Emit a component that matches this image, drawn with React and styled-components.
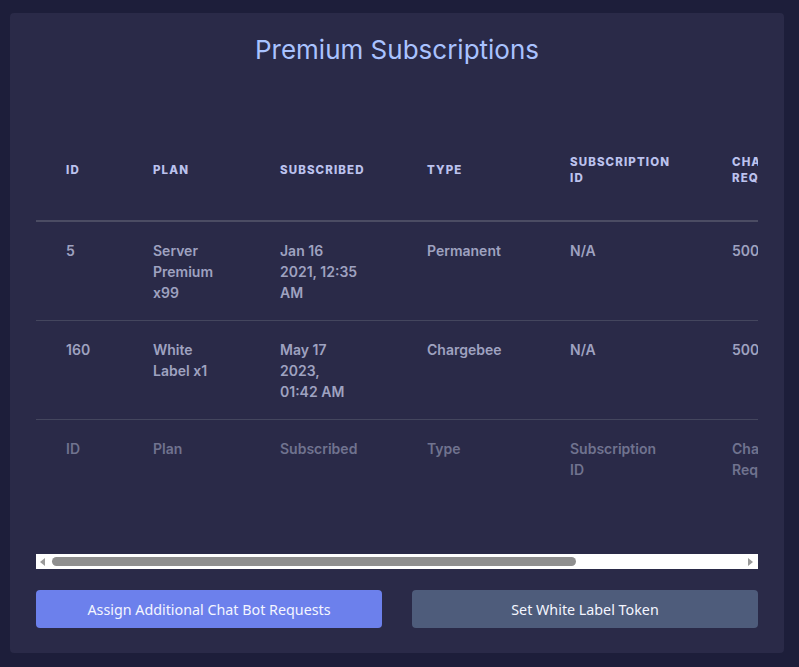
import styled, { createGlobalStyle } from "styled-components";

const GlobalStyle = createGlobalStyle`
  html, body {
    margin: 0;
    padding: 0;
    background: #1d1e3a;
  }
  body {
    font-family: Inter, "Liberation Sans", sans-serif;
  }
`;

const Page = styled.div`
  min-height: 667px;
  padding: 13px 15px 14px 10px;
  box-sizing: border-box;
`;

const Card = styled.section`
  background: #2a2a48;
  border-radius: 4px;
  padding: 22px 26px 25px;
  display: flex;
  flex-direction: column;
`;

const Title = styled.h2`
  margin: 0;
  text-align: center;
  font-size: 26px;
  font-weight: 400;
  line-height: 30px;
  color: #a9c2ff;
`;

const TableWrap = styled.div`
  margin-top: 55px;
  overflow: hidden;
  padding-bottom: 56px;
`;

const Table = styled.table`
  border-collapse: collapse;
  table-layout: fixed;
  width: 1000px;
`;

const HeadCell = styled.th`
  padding: 34px 30px;
  text-align: left;
  vertical-align: middle;
  font-size: 11.5px;
  line-height: 16px;
  font-weight: 800;
  letter-spacing: 1.1px;
  text-transform: uppercase;
  color: #bcc2ee;
  border-bottom: 2px solid #4b4c63;
`;

const Row = styled.tr`
  border-bottom: 1px solid ${(p) => (p.$last ? "transparent" : "#44465e")};
`;

const Cell = styled.td`
  padding: 18px 30px 17px;
  vertical-align: top;
  font-size: 14px;
  line-height: 21px;
  font-weight: 600;
  color: ${(p) => (p.$muted ? "#70738f" : "#9fa2c0")};
`;

const ScrollBar = styled.div`
  height: 15px;
  background: #ffffff;
  display: flex;
  align-items: center;
  padding: 0 5px 0 4px;
  gap: 7px;
`;

const Arrow = styled.span`
  width: 0;
  height: 0;
  border-top: 4px solid transparent;
  border-bottom: 4px solid transparent;
  ${(p) =>
    p.$dir === "left"
      ? "border-right: 5px solid #9a9a9a;"
      : "border-left: 5px solid #9a9a9a;"}
`;

const Track = styled.div`
  flex: 1;
  height: 9px;
`;

const Thumb = styled.div`
  height: 9px;
  border-radius: 5px;
  background: #8f8f8f;
`;

const Actions = styled.div`
  display: grid;
  grid-template-columns: 1fr 1fr;
  gap: 30px;
  margin-top: 21px;
`;

const Button = styled.button`
  height: 38px;
  border: none;
  border-radius: 4px;
  background: ${(p) => (p.$primary ? "#6c80ec" : "#4e5c7b")};
  color: #f4f6ff;
  font-family: "Noto Sans", "Open Sans", sans-serif;
  font-size: 14.3px;
  cursor: pointer;
`;

const columns = [
  { key: "id", head: "ID", foot: "ID", width: 87 },
  { key: "plan", head: "Plan", foot: "Plan", width: 127 },
  { key: "subscribed", head: "Subscribed", foot: "Subscribed", width: 147 },
  { key: "type", head: "Type", foot: "Type", width: 143 },
  { key: "subId", head: "Subscription ID", foot: "Subscription ID", width: 162 },
  { key: "requests", head: "Chat Requests", foot: "Chat Requests", width: 150 },
  { key: "expires", head: "Expires", foot: "Expires", width: 184 },
];

const rows = [
  {
    id: "5",
    plan: "Server Premium x99",
    subscribed: ["Jan 16", "2021, 12:35", "AM"],
    type: "Permanent",
    subId: "N/A",
    requests: "5000",
    expires: "Never",
  },
  {
    id: "160",
    plan: "White Label x1",
    subscribed: ["May 17", "2023,", "01:42 AM"],
    type: "Chargebee",
    subId: "N/A",
    requests: "5000",
    expires: "Never",
  },
];

// dates are broken the way the narrow column wraps them
const renderValue = (value) =>
  Array.isArray(value)
    ? value.map((line, i) => (
        <span key={i}>
          {line}
          {i < value.length - 1 && <br />}
        </span>
      ))
    : value;

export default function App() {
  return (
    <Page>
      <GlobalStyle />
      <Card>
        <Title>Premium Subscriptions</Title>
        <TableWrap>
          <Table>
            <colgroup>
              {columns.map((c) => (
                <col key={c.key} style={{ width: c.width }} />
              ))}
            </colgroup>
            <thead>
              <tr>
                {columns.map((c) => (
                  <HeadCell key={c.key}>{c.head}</HeadCell>
                ))}
              </tr>
            </thead>
            <tbody>
              {rows.map((r) => (
                <Row key={r.id}>
                  {columns.map((c) => (
                    <Cell key={c.key}>{renderValue(r[c.key])}</Cell>
                  ))}
                </Row>
              ))}
            </tbody>
            <tfoot>
              <Row $last>
                {columns.map((c) => (
                  <Cell key={c.key} $muted>
                    {c.foot}
                  </Cell>
                ))}
              </Row>
            </tfoot>
          </Table>
        </TableWrap>
        <ScrollBar>
          <Arrow $dir="left" />
          <Track>
            <Thumb style={{ width: `${(525 / 690) * 100}%` }} />
          </Track>
          <Arrow $dir="right" />
        </ScrollBar>
        <Actions>
          <Button $primary>Assign Additional Chat Bot Requests</Button>
          <Button>Set White Label Token</Button>
        </Actions>
      </Card>
    </Page>
  );
}
